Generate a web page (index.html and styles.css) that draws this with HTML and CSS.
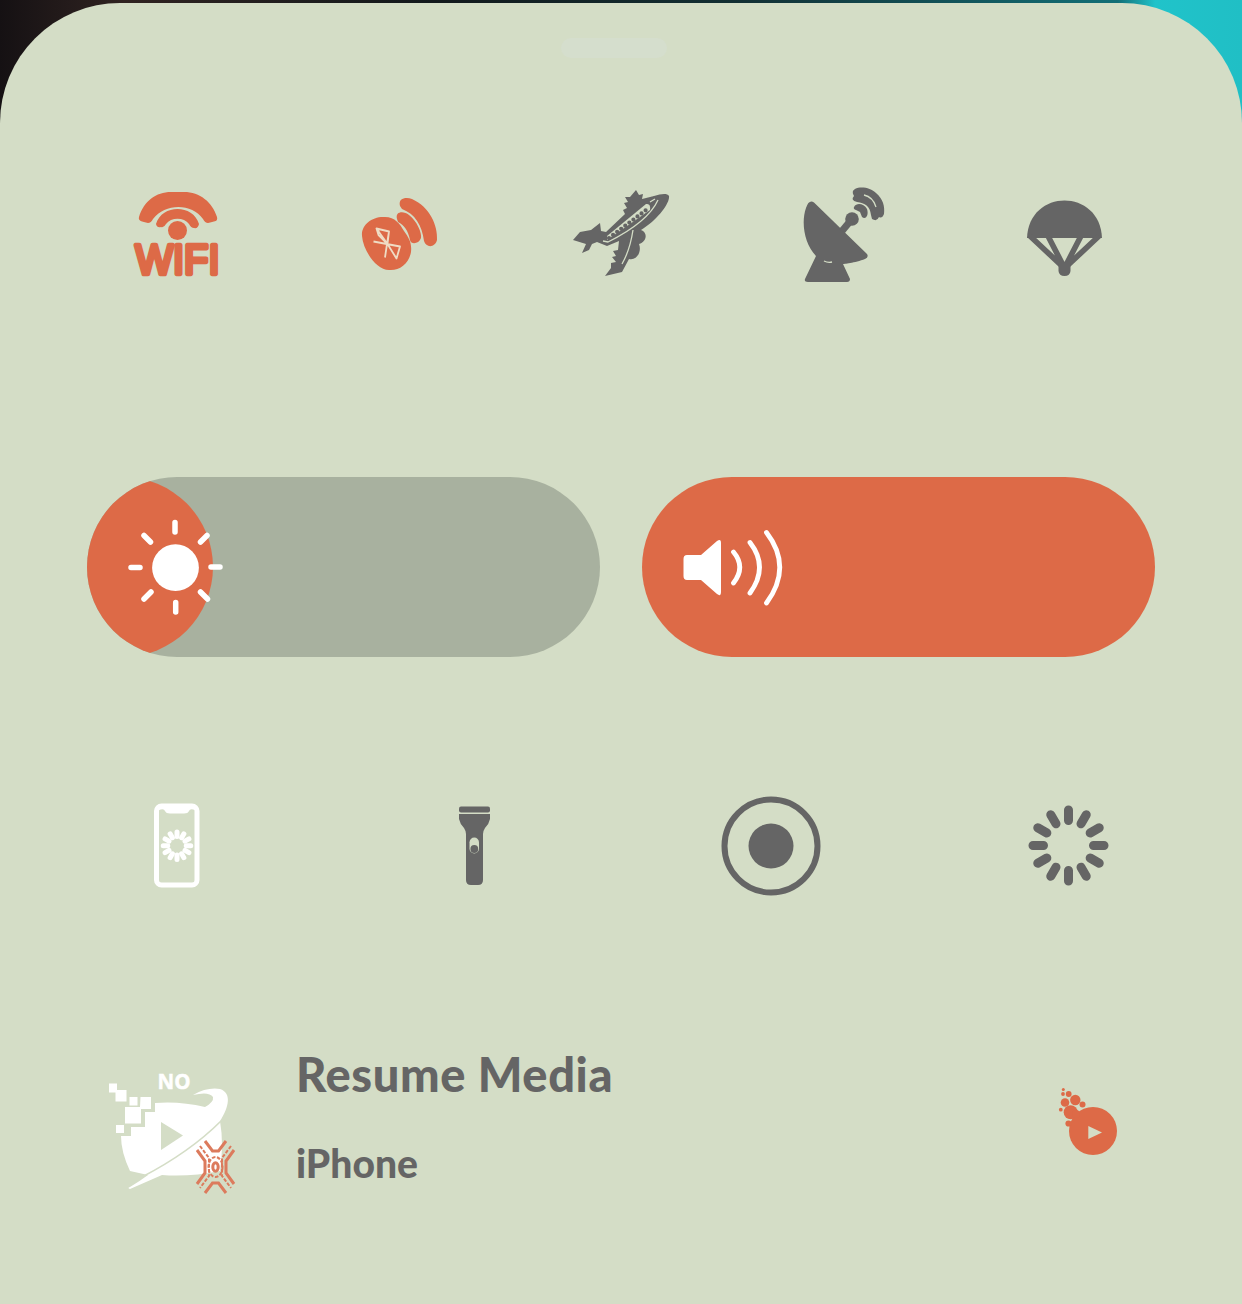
FILE: index.html
```html
<!DOCTYPE html>
<html lang="en">
<head>
<meta charset="utf-8">
<title>Control Center</title>
<link rel="stylesheet" href="styles.css">
</head>
<body>
<main class="sheet">
  <div class="grabber"></div>

  <section class="row toggles">
    <svg class="icon on" viewBox="117 180 120 110">
      <path d="M139 217C144 201 156 192 171 192H184C200 192 212 202 217 217Q218 221 214 221.500L208 223Q205 223 203 219C192 203 165 203 153 219Q151 223 148 223L142 221.500Q138 220 139 217Z"/>
      <path d="M156 224C162 204 193 204 199 224Q198 229 194 228Q191 228 189 224C184 217 171 217 166 224Q164 228 161 227Q157 228 156 224Z"/>
      <circle cx="177.500" cy="230.500" r="9.500"/>
      <text class="wifi-label" x="135.500" y="274" textLength="84" lengthAdjust="spacingAndGlyphs">WIFI</text>
    </svg>
    <svg class="icon on" viewBox="339 180 120 110">
      <path d="M362 236C361 225 372 216 385 217C395 217 400 224 404 231C409 238 412 243 411 252C409 264 399 271 389 270C376 270 363 250 362 236Z"/>
      <path d="M397 219C395 211 404 211 409 215C417 221 422 233 421 238C419 244 411 245 410 240C408 230 404 225 398 222Z"/>
      <path d="M400 206C398 198 406 197 412 199C430 207 438 226 437 240C435 248 426 248 424 241C422 225 415 214 402 209Z"/>
      <path class="rune" d="M373.500 241.500L400 246.500L396.500 258.500L387.500 244L376.500 228.500L389 231.500L387 244L385 257.500M376.500 228.500L378.500 235L387.500 244L389 231.500"/>
    </svg>
    <svg class="icon" viewBox="561 180 120 110">
      <path d="M573 240L580 232L591 230L600 223L601 231L606 232L625 214L623 210L627 208L624 203L628 202L625 197L630 197L636 190L639 195L643 194L642 199L654 196C661 194 667 193 669 196C670 202 660 217 644 228L641 230C648 232 647 242 639 244C642 251 637 261 629 259L622 272L605 276L611 268L611 263L616 262L612 257L616 256L613 251L618 250L619 241L607 246L597 242L592 244L589 250L582 253L586 244Z"/>
      <path class="cabin" d="M607 236L646 204Q651 203 650 210L607 240Z"/>
      <path class="portholes" d="M609 238L646 210"/>
      <path class="trim" d="M603 241L608 242Q648 222 658 200M633 230Q630 250 622 264M650 202L655 199"/>
    </svg>
    <svg class="icon" viewBox="783 180 120 110">
      <path d="M814 202.500L867 254Q869 257 865 259C855 263 843 264 843 264L850 279Q850 282 847 282L808 282Q804 282 805 279L816 256C804 244 801 222 806 208Q809 199 814 202.500Z"/>
      <circle cx="852" cy="219" r="6.800"/>
      <path class="feed" d="M842 231L852 219"/>
      <path d="M854 207C857 202 864 204 867 209C869 215 866 220 862 217L860 212L856 210Q853 209 854 207Z"/>
      <path d="M855 189C861 186 871 188 876 193C883 199 885 206 884 214Q882 219 879 217Q877 222 872 219L871 215C870 206 865 203 857 202Q850 200 854 196Q851 191 855 189Z"/>
      <path class="trim" d="M864 195Q873 197 876 207M824 261Q828 263 832 262"/>
    </svg>
    <svg class="icon" viewBox="1005 180 120 110">
      <path d="M1027 238C1029 188 1100 188 1102 238Z"/>
      <path class="cords" d="M1030 236L1062 266M1048 236L1064.500 268L1081 236M1099 236L1067 266"/>
      <path d="M1058.500 263H1070.500V271Q1070 276 1064.500 276Q1059 276 1058.500 271Z"/>
    </svg>
  </section>

  <section class="sliders">
    <div class="slider brightness">
      <div class="fill"></div>
      <svg class="glyph" viewBox="87 477 180 180">
        <circle class="white" cx="175.500" cy="567.700" r="23.400"/>
        <path class="rays" d="M175 522.500V532M175.700 602.500V612M131 567.500H140M211 567H220M144 535.500L150.500 542M200.500 542L207 535.500M144 599L151 592M200.500 592L207.500 599"/>
      </svg>
    </div>
    <div class="slider volume">
      <svg class="glyph" viewBox="642 477 180 180">
        <path class="white" d="M687 555H701L717 541Q721 538 721 543V592Q721 597 717 594L701 580H687Q683.500 580 683.500 576V559Q683.500 555 687 555Z"/>
        <path class="waves" d="M733.500 552Q746 567 733.500 583M750 542.500Q769 567 750 593M766.500 532.500Q793 567 766.500 603"/>
      </svg>
    </div>
  </section>

  <section class="row tools">
    <svg class="icon" viewBox="117 786 120 120">
      <rect class="phone" x="156.500" y="806" width="40.500" height="79" rx="5"/>
      <path class="white" d="M159 805H195V810Q190 808 189 811Q188 813.500 184 813.500H170Q166 813.500 165 811Q164 808 159 810Z"/>
      <g class="mini-spinner">
        <path d="M177 832V836.500M177 855V859.500M163.250 845.750H167.750M186.250 845.750H190.750"/>
        <path transform="rotate(30 177 845.750)" d="M177 832V836.500M177 855V859.500M163.250 845.750H167.750M186.250 845.750H190.750"/>
        <path transform="rotate(60 177 845.750)" d="M177 832V836.500M177 855V859.500M163.250 845.750H167.750M186.250 845.750H190.750"/>
      </g>
    </svg>
    <svg class="icon" viewBox="414 786 120 120">
      <rect x="459" y="806.500" width="31" height="6" rx="2"/>
      <path d="M459 814H490V819Q489 824 485 828Q483 831 483 834V880Q483 885 478 885H471Q466 885 466 880V834Q466 831 464 828Q460 824 459 819Z"/>
      <rect class="cutout" x="469.500" y="837.500" width="9.500" height="16" rx="4.750"/>
      <circle cx="474.300" cy="849" r="3.900"/>
    </svg>
    <svg class="icon" viewBox="711 786 120 120">
      <circle class="ring" cx="771" cy="846" r="46.500"/>
      <circle cx="771" cy="846" r="22.500"/>
    </svg>
    <svg class="icon" viewBox="1008 786 120 120">
      <g class="spinner">
        <path d="M1068.500 810V820.500M1068.500 870.500V881M1033 845.500H1043.500M1093.500 845.500H1104"/>
        <path transform="rotate(30 1068.500 845.500)" d="M1068.500 810V820.500M1068.500 870.500V881M1033 845.500H1043.500M1093.500 845.500H1104"/>
        <path transform="rotate(60 1068.500 845.500)" d="M1068.500 810V820.500M1068.500 870.500V881M1033 845.500H1043.500M1093.500 845.500H1104"/>
      </g>
    </svg>
  </section>

  <section class="media">
    <svg class="artwork" viewBox="95 1060 150 145">
      <g class="white">
        <text class="no-label" x="157.500" y="1088.500" textLength="33" lengthAdjust="spacingAndGlyphs">NO</text>
        <path d="M109 1083.500H117V1090H126.500V1101.500H115.500V1092.500H109Z"/>
        <rect x="129.500" y="1097" width="8" height="8.500"/>
        <path d="M140.500 1097H151V1109H141V1123.500H125V1107H140Z"/>
        <rect x="116" y="1125" width="8" height="8"/>
        <path fill-rule="evenodd" d="M155 1103Q180 1101 205 1107Q214 1102 213 1097Q209 1091 193 1095Q207 1087 220 1089C232 1093 229 1107 220 1121Q224 1144 220 1171Q190 1177 162 1175L130 1189Q127 1188 130 1187Q140 1181 148 1175L130 1171Q121 1152 121 1136H131V1127H145V1112H155ZM161 1122V1150L183 1135.500Z"/>
      </g>
      <path class="sash" d="M142 1177Q190 1152 221 1121"/>
      <g class="emblem">
        <path class="band" d="M205 1141L212.500 1151H218.500L226 1141M197 1150L205 1161V1173L197 1184M234 1150L226 1161V1173L234 1184M205 1193L212.500 1183H218.500L226 1193"/>
        <path class="dots" d="M200 1146L209 1158V1176L200 1188M231 1146L222 1158V1176L231 1188"/>
        <ellipse class="dots" cx="215.500" cy="1167" rx="7" ry="10"/>
        <ellipse class="band" cx="215.500" cy="1167" rx="2.700" ry="4.200"/>
      </g>
    </svg>
    <div class="info">
      <div class="title">Resume Media</div>
      <div class="device">iPhone</div>
    </div>
    <svg class="play on" viewBox="1045 1075 85 90">
      <circle cx="1093" cy="1131" r="24"/>
      <circle cx="1070.700" cy="1112.300" r="7"/><circle cx="1075.300" cy="1100" r="5.200"/>
      <circle cx="1065" cy="1102.500" r="4.300"/><circle cx="1068.700" cy="1094" r="2.900"/>
      <circle cx="1063" cy="1094" r="1.900"/><circle cx="1063.300" cy="1089.500" r="1.500"/>
      <circle cx="1060.800" cy="1109.700" r="1.900"/><circle cx="1068.500" cy="1123.500" r="3.100"/>
      <circle cx="1082.500" cy="1104.500" r="3"/><circle cx="1076" cy="1114" r="4"/>
      <path class="cutout" d="M1088.300 1126V1139L1102 1132.500Z"/>
    </svg>
  </section>
</main>
</body>
</html>
```
FILE: styles.css
```css
* { box-sizing: border-box; }

body {
  margin: 0;
  height: 1304px;
  overflow: hidden;
  padding-top: 3px;
  background: linear-gradient(90deg, #151113 0, #302321 10%, #12191c 35%, #123034 60%, #126f77 90%, #20c3ca 93%, #20bfc5 100%);
  font-family: Lato, "Open Sans", sans-serif;
}

.sheet {
  display: flex;
  flex-direction: column;
  height: 1301px;
  border-radius: 120px 120px 0 0;
  background: #d4ddc6;
}

.grabber {
  align-self: center;
  width: 106px;
  height: 20px;
  margin: 35px 0 122px;
  transform: translateX(-7px);
  border-radius: 10px;
  background: #d5decd;
}

.row {
  display: flex;
  justify-content: space-between;
}

.toggles { padding: 0 117px; height: 110px; }
.tools { padding: 0 114px 0 117px; height: 120px; margin-top: 129px; }

svg { display: block; fill: #656565; flex: none; }
.icon { width: 120px; height: 100%; }
.on { fill: #dd6a47; }
.white { fill: #fff; }
.cutout, .cabin { fill: #d4ddc6; }

.wifi-label {
  font: 400 42px "Liberation Sans", sans-serif;
  stroke: #dd6a47;
  stroke-width: 4.5;
  stroke-linejoin: round;
}

.rune { fill: none; stroke: #efdcc4; stroke-width: 1.8; stroke-linejoin: round; }
.portholes { fill: none; stroke: #656565; stroke-width: 4.2; stroke-linecap: round; stroke-dasharray: 0 5.1; }
.trim { fill: none; stroke: #d4ddc6; stroke-width: 1.3; }
.feed { stroke: #656565; stroke-width: 7; }
.cords { fill: none; stroke: #656565; stroke-width: 5.6; }

.sliders {
  display: flex;
  gap: 42px;
  margin-top: 187px;
  padding: 0 87px;
}

.slider {
  display: grid;
  width: 513px;
  height: 180px;
  border-radius: 90px;
  overflow: hidden;
}

.slider > * { grid-area: 1 / 1; }
.brightness { background: #a8b19f; }
.volume { background: #dd6a47; }
.fill { width: 126px; background: #dd6a47; border-radius: 0 90px 90px 0; }
.glyph { width: 180px; height: 180px; }
.rays, .waves { fill: none; stroke: #fff; stroke-linecap: round; stroke-width: 5.5; }
.waves { stroke-width: 4.8; }

.phone { fill: none; stroke: #fff; stroke-width: 5; }
.ring { fill: none; stroke: #656565; stroke-width: 6; }
.spinner { stroke: #656565; stroke-width: 9; stroke-linecap: round; }
.mini-spinner { stroke: #fff; stroke-width: 5; stroke-linecap: round; }

.media {
  display: flex;
  margin-top: 154px;
  padding: 0 112px 0 95px;
}

.artwork { width: 150px; height: 145px; }
.no-label { font: 700 21px "Open Sans", sans-serif; stroke: #fff; stroke-width: .5; }
.sash { fill: none; stroke: #d4ddc6; stroke-width: 1.6; }
.emblem { fill: none; stroke: #dc7b5d; }
.band { stroke-width: 3; }
.dots { stroke-width: 2; stroke-dasharray: 3.6 1.6; }

.info {
  flex: 1;
  margin-left: 51px;
  color: #656565;
  font-weight: 900;
  white-space: nowrap;
}

.title { margin-top: -18px; font-size: 47px; line-height: 64px; letter-spacing: .6px; }
.device { margin-top: 29px; font-size: 39px; line-height: 56px; }
.play { width: 85px; height: 90px; margin-top: 15px; }
```
